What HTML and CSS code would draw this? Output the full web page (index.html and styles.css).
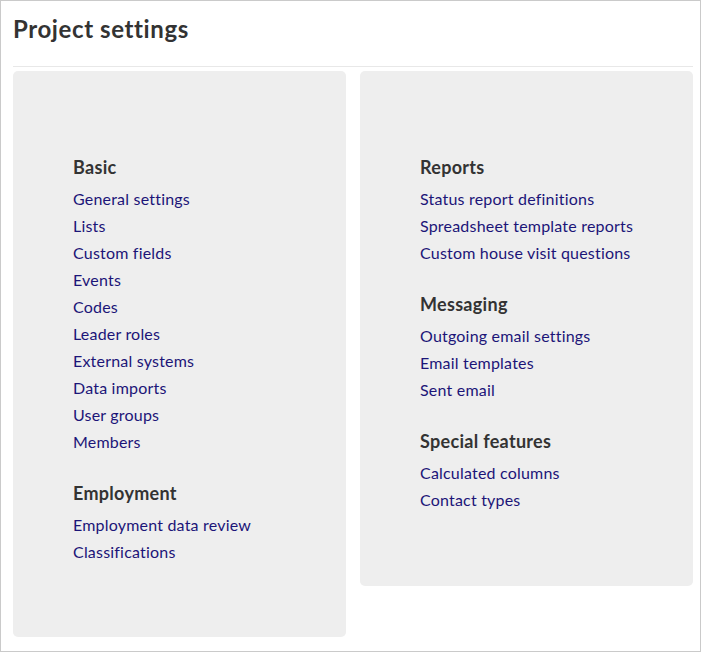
FILE: index.html
```html
<!DOCTYPE html>
<html>
<head>
<meta charset="utf-8">
<link rel="stylesheet" href="styles.css">
</head>
<body>
<div class="frame">
  <h1 class="title">Project settings</h1>
  <div class="panels">
    <div class="panel panel-left">
      <div class="group">
        <h2 class="group-title">Basic</h2>
        <ul class="links">
          <li><a href="#">General settings</a></li>
          <li><a href="#">Lists</a></li>
          <li><a href="#">Custom fields</a></li>
          <li><a href="#">Events</a></li>
          <li><a href="#">Codes</a></li>
          <li><a href="#">Leader roles</a></li>
          <li><a href="#">External systems</a></li>
          <li><a href="#">Data imports</a></li>
          <li><a href="#">User groups</a></li>
          <li><a href="#">Members</a></li>
        </ul>
      </div>
      <div class="group">
        <h2 class="group-title">Employment</h2>
        <ul class="links">
          <li><a href="#">Employment data review</a></li>
          <li><a href="#">Classifications</a></li>
        </ul>
      </div>
    </div>
    <div class="panel panel-right">
      <div class="group">
        <h2 class="group-title">Reports</h2>
        <ul class="links">
          <li><a href="#">Status report definitions</a></li>
          <li><a href="#">Spreadsheet template reports</a></li>
          <li><a href="#">Custom house visit questions</a></li>
        </ul>
      </div>
      <div class="group">
        <h2 class="group-title">Messaging</h2>
        <ul class="links">
          <li><a href="#">Outgoing email settings</a></li>
          <li><a href="#">Email templates</a></li>
          <li><a href="#">Sent email</a></li>
        </ul>
      </div>
      <div class="group">
        <h2 class="group-title">Special features</h2>
        <ul class="links">
          <li><a href="#">Calculated columns</a></li>
          <li><a href="#">Contact types</a></li>
        </ul>
      </div>
    </div>
  </div>
</div>
</body>
</html>
```
FILE: styles.css
```css
html, body {
  margin: 0;
  padding: 0;
  background: #fff;
}
body {
  font-family: Lato, "Noto Sans", sans-serif;
  color: #333;
}
.frame {
  box-sizing: border-box;
  width: 701px;
  height: 652px;
  border: 1px solid #cacaca;
  padding: 0 7px 0 12px;
}
.title {
  margin: 0;
  padding: 14px 0 0 0;
  height: 66px;
  box-sizing: border-box;
  font-size: 24px;
  font-weight: 700;
  line-height: 28px;
  letter-spacing: 0.6px;
  color: #333;
  border-bottom: 1px solid #e8e8e8;
}
.panels {
  display: flex;
  align-items: flex-start;
  gap: 14px;
  margin-top: 4px;
}
.panel {
  width: 333px;
  box-sizing: border-box;
  background: #eeeeee;
  border-radius: 5px;
  padding: 83px 30px 72px 60px;
}
.panel-left { height: 566px; }
.panel-right { height: 515px; }
.group + .group {
  margin-top: 25px;
}
.group-title {
  margin: 0 0 4px 0;
  font-size: 18px;
  font-weight: 700;
  line-height: 27px;
  letter-spacing: 0.3px;
  color: #333;
}
.links {
  list-style: none;
  margin: 0;
  padding: 0;
}
.links li {
  font-size: 16px;
  line-height: 27px;
  letter-spacing: 0.2px;
}
.links a {
  color: #1c1578;
  text-decoration: none;
}
```
